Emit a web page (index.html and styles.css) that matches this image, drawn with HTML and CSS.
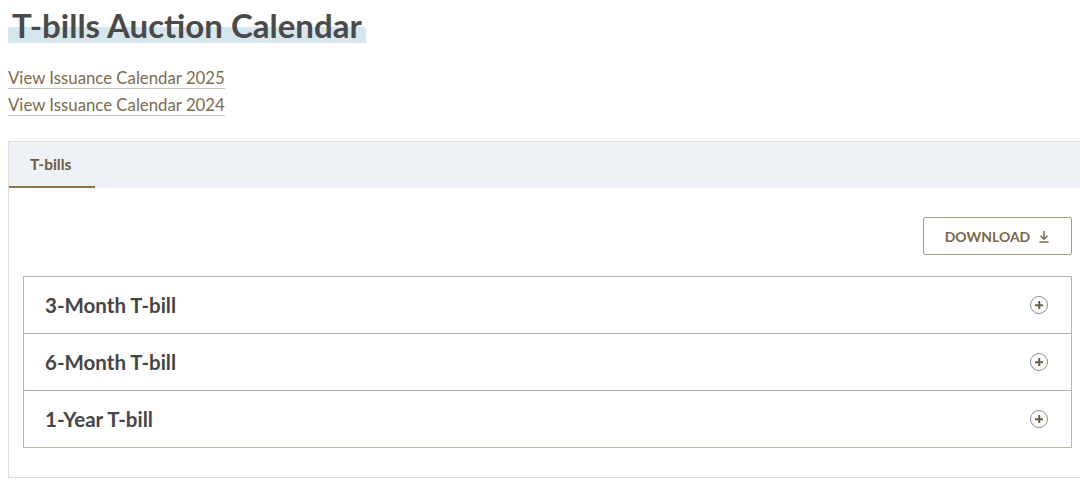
FILE: index.html
```html
<!DOCTYPE html>
<html lang="en">
<head>
  <meta charset="UTF-8">
  <title>T-bills Auction Calendar</title>
  <meta name="viewport" content="width=device-width, initial-scale=1.0">
  <link rel="stylesheet" href="styles.css">
</head>
<body>
  <h1 class="title"><span>T-bills Auction Calendar</span></h1>

  <div class="links">
    <a href="#">View Issuance Calendar 2025</a>
    <a href="#">View Issuance Calendar 2024</a>
  </div>

  <div class="panel">
    <div class="tabs">
      <div class="tab active">T-bills</div>
    </div>
    <div class="panel-body">
      <div class="toolbar">
        <button class="download">DOWNLOAD
          <svg width="12" height="13" viewBox="0 0 12 13" fill="none" stroke="currentColor" stroke-width="1.4">
            <path d="M6 1v8M2.5 5.8L6 9.2l3.5-3.4M1.5 12h9"/>
          </svg>
        </button>
      </div>
      <div class="accordion">
        <div class="acc-row"><span>3-Month T-bill</span><i class="plus"></i></div>
        <div class="acc-row"><span>6-Month T-bill</span><i class="plus"></i></div>
        <div class="acc-row"><span>1-Year T-bill</span><i class="plus"></i></div>
      </div>
    </div>
  </div>
</body>
</html>
```
FILE: styles.css
```css
body { margin: 0; padding: 0 8px; font-family: Lato, "Open Sans", sans-serif; color: #444; background: #fff; overflow: hidden; }
.title { margin: 0; padding-top: 5px; font-size: 33px; font-weight: 700; line-height: 40px; color: #4a4a4a; }
.title span { display: inline-block; padding: 0 4px; background: linear-gradient(to bottom, transparent 55%, #d5e6ef 55%, #d5e6ef 95%, transparent 95%); }
.links { margin-top: 22px; display: flex; flex-direction: column; align-items: flex-start; gap: 5px; }
.links a { color: #7d6b4e; text-decoration: none; font-size: 16.8px; line-height: 21px; border-bottom: 1px solid #cbc3b3; }
.panel { margin-top: 25px; width: 1078px; border: 1px solid #ddd; border-right: 0; }
.tabs { display: flex; background: #eef1f5; height: 46px; }
.tab { padding: 0 24px 0 21px; line-height: 44px; font-size: 15.5px; font-weight: 700; color: #6e5d43; }
.tab.active { border-bottom: 2px solid #8a7352; }
.panel-body { padding: 29px 0 29px 14px; }
.toolbar { display: flex; justify-content: flex-end; padding-right: 15px; margin-bottom: 21px; }
.download { display: flex; align-items: center; gap: 8px; height: 38px; width: 149px; justify-content: center; background: #fff; border: 1px solid #a69d88; border-radius: 2px; color: #7a6748; font-family: inherit; font-size: 14px; font-weight: 700; }
.accordion { margin-right: 15px; border: 1px solid #b9b6a6; }
.acc-row { display: flex; align-items: center; justify-content: space-between; height: 56px; padding: 0 23px 0 21px; font-size: 20.5px; font-weight: 700; color: #454545; }
.acc-row + .acc-row { border-top: 1px solid #b9b6a6; }
.plus { position: relative; width: 16px; height: 16px; border: 1px solid #8f8f8f; border-radius: 50%; }
.plus::before, .plus::after { content: ""; position: absolute; background: #6e5d43; left: 50%; top: 50%; }
.plus::before { width: 8px; height: 1.5px; transform: translate(-50%, -50%); }
.plus::after { width: 1.5px; height: 8px; transform: translate(-50%, -50%); }
```
